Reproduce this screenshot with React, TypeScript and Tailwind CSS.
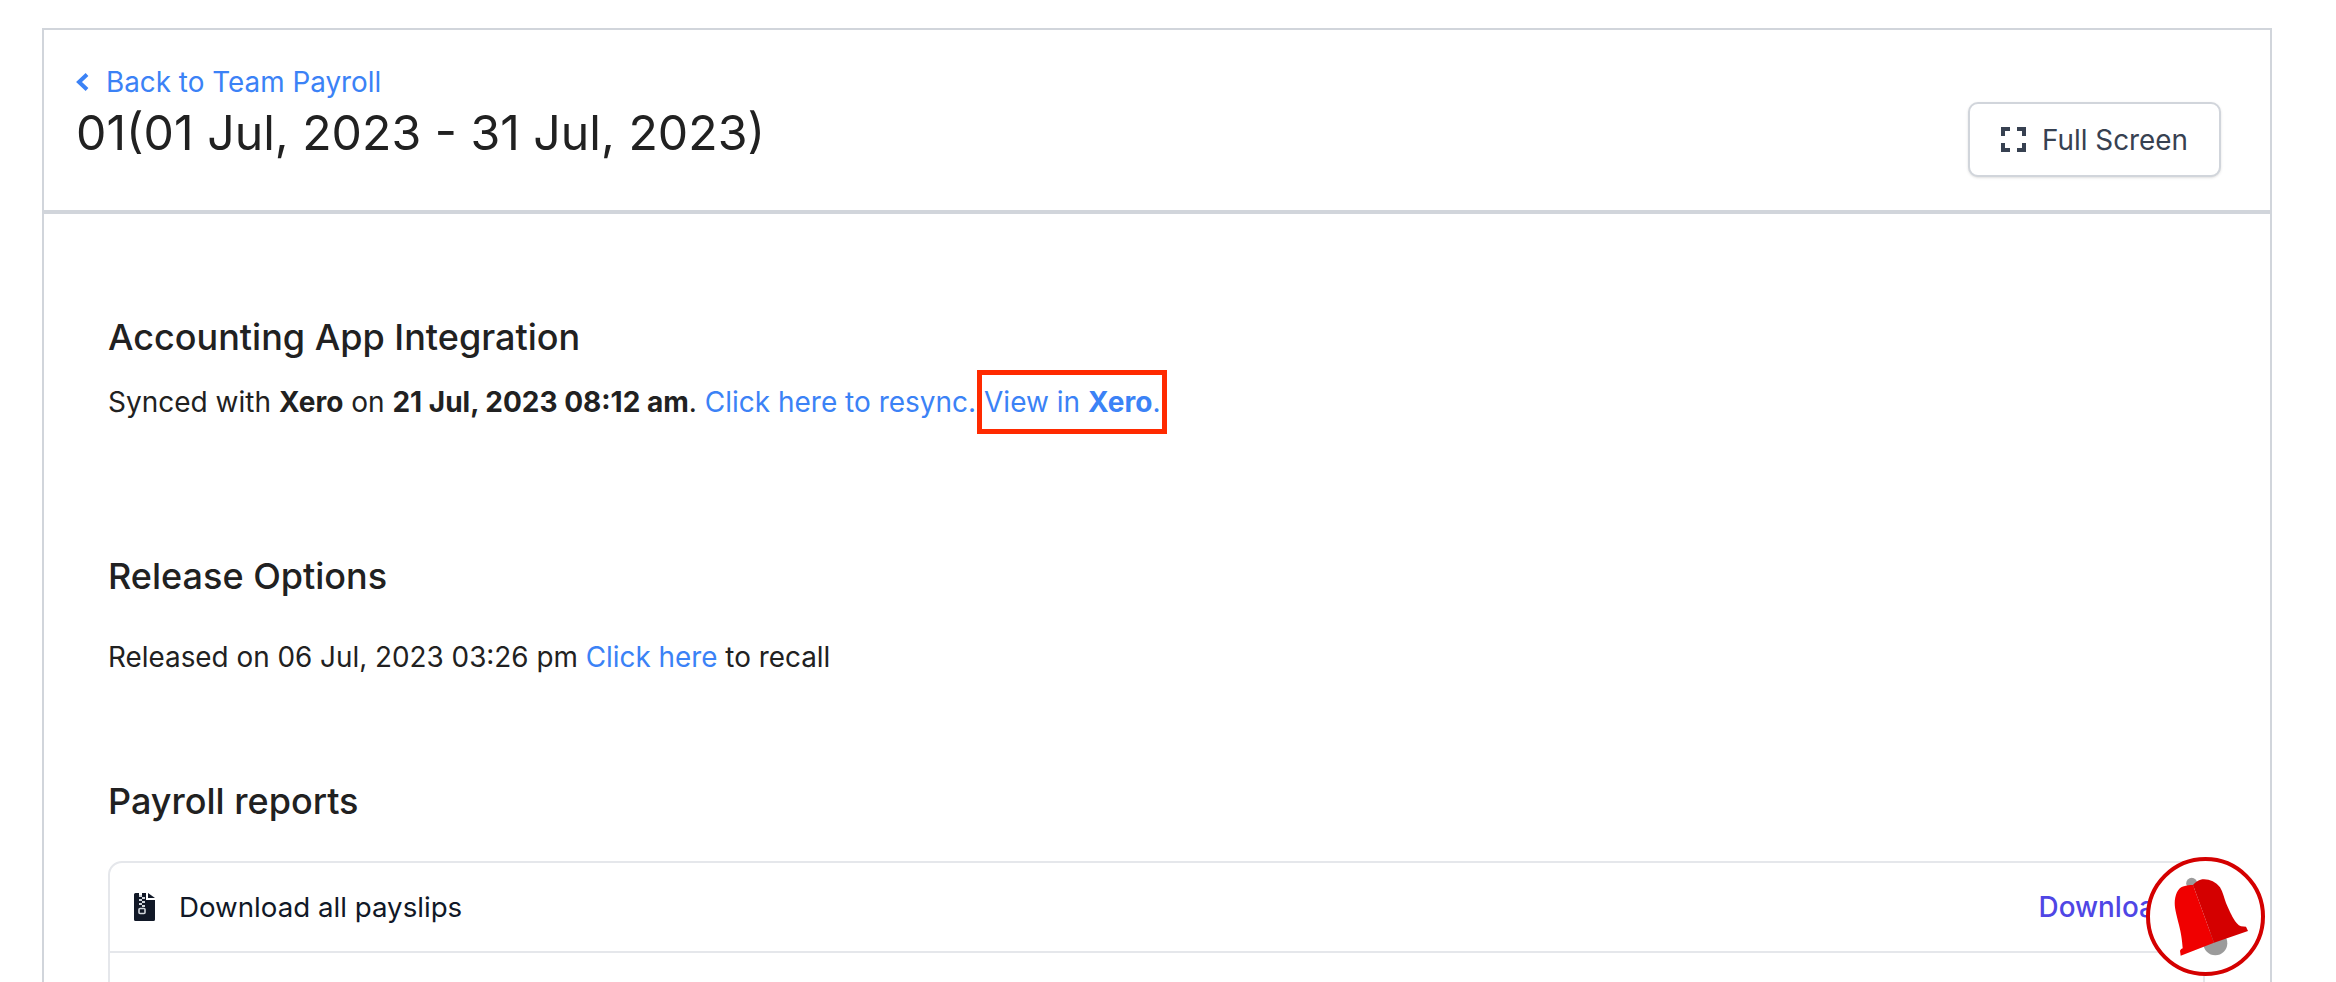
const FullScreenIcon = () => (
  <svg width="25" height="25" viewBox="0 0 25 25" fill="none" stroke="#374151" strokeWidth="4">
    <path d="M2 9V2h7M16 2h7v7M23 16v7h-7M9 23H2v-7" />
  </svg>
);

const BackChevron = () => (
  <svg width="13" height="18" viewBox="0 0 13 18" fill="none" stroke="#3b82f6" strokeWidth="4">
    <path d="M11 1.5 L3 9 L11 16.5" />
  </svg>
);

const ZipIcon = () => (
  <svg width="21" height="28" viewBox="0 0 21 28">
    <path
      d="M1.5 0H5v2h3V0h4v7h9v19.5a1.5 1.5 0 0 1-1.5 1.5h-18A1.5 1.5 0 0 1 0 26.5v-25A1.5 1.5 0 0 1 1.5 0Z"
      fill="#111827"
    />
    <path d="M14 0l7 5h-7Z" fill="#111827" />
    <path d="M5 2h3v2H5ZM8 4h3v2H8ZM5 6h3v2H5ZM8 8h3v2H8ZM5 10h3v2H5ZM8 12h3v2H8Z" fill="#d1d5db" />
    <rect x="5" y="15.5" width="6" height="5" rx="1" fill="none" stroke="#d1d5db" strokeWidth="1.6" />
  </svg>
);

// bell badge that sits over the corner of the page
const BellBadge = () => (
  <div className="absolute left-[2146px] top-[857px] h-[119px] w-[119px] rounded-full border-[4px] border-[#d40000] bg-white">
    <svg className="absolute -left-[4px] -top-[4px]" width="119" height="119" viewBox="0 0 119 119">
      <circle cx="45.7" cy="26.3" r="5.5" fill="#9b9b9b" />
      <circle cx="69.3" cy="86.3" r="12" fill="#9b9b9b" />
      <path
        d="M34.7 98.7 L34 93.7 Q35 91.5 36.7 91.3 C36 82 35 76 33 68 C31 60 28.7 52 28.7 46.3 C28.7 38 32 31 37 29.5 C41 28 44 28 47 28 L68 85.7 Z"
        fill="#f00000"
      />
      <path
        d="M47 28 C50 25 53 22.3 58 22.3 C64 22.3 70 25 74 30.3 C77 35 78 41 80 46 C83 53 85 57 87.3 61.3 C89.5 65 92 68.5 95 69.3 L100 69.7 L102 74 L68 85.7 Z"
        fill="#d40000"
      />
    </svg>
  </div>
);

export default function App() {
  return (
    <div
      className="relative h-[982px] w-[2336px] overflow-hidden bg-white pl-[42px] pr-[64px] pt-[28px] text-[27.85px] leading-[42px] text-[#212121]"
      style={{ fontFamily: "Inter, sans-serif" }}
    >
      <div className="h-[1100px] border-2 border-b-0 border-[#d1d5db]">
        {/* page header */}
        <header className="flex h-[184px] items-start justify-between border-b-4 border-[#d1d5db] pl-[32px] pr-[49px]">
          <div className="pt-[31px]">
            <a href="#" className="flex items-center gap-[17px] text-[#3b82f6]">
              <BackChevron />
              <span>Back to Team Payroll</span>
            </a>
            <h1 className="text-[48.2px] leading-[60px]">01(01 Jul, 2023 - 31 Jul, 2023)</h1>
          </div>
          <button className="mt-[72px] flex h-[75px] w-[253px] items-center justify-center gap-[16px] rounded-[10px] border-2 border-[#d1d5db] bg-white text-[#374151] shadow-sm">
            <FullScreenIcon />
            <span>Full Screen</span>
          </button>
        </header>

        <main className="pl-[64px] pr-[65px]">
          <section className="pt-[97px]">
            <h2 className="text-[36px] font-medium leading-[52px]">Accounting App Integration</h2>
            <p className="mt-[18px] text-[28px]">
              Synced with <b>Xero</b> on <b>21 Jul, 2023 08:12 am</b>.{" "}
              <a href="#" className="text-[#3b82f6]">Click here to resync.</a>{" "}
              <a href="#" className="relative inline-block text-[#3b82f6]">
                View in <b>Xero</b>.
                <span className="absolute -inset-x-[7px] -inset-y-[11px] border-[5px] border-[#ff2a00]" />
              </a>
            </p>
          </section>

          <section className="pt-[127px]">
            <h2 className="text-[36px] font-medium leading-[52px]">Release Options</h2>
            <p className="mt-[34px]">
              Released on 06 Jul, 2023 03:26 pm <a href="#" className="text-[#3b82f6]">Click here</a> to recall
            </p>
          </section>

          <section className="pt-[97px]">
            <h2 className="text-[36px] font-medium leading-[52px]">Payroll reports</h2>
            <div className="mt-[34px] rounded-t-[14px] border-2 border-[#e5e7eb]">
              <div className="flex h-[90px] items-center justify-between border-b-2 border-[#e5e7eb] pl-[24px] pr-[31px] text-[#111827]">
                <div className="flex items-center gap-[24px]">
                  <ZipIcon />
                  <span className="text-[27.7px]">Download all payslips</span>
                </div>
                <a href="#" className="font-medium text-[#4f46e5]">Download</a>
              </div>
              <div className="h-[90px]" />
            </div>
          </section>
        </main>
      </div>
      <BellBadge />
    </div>
  );
}
